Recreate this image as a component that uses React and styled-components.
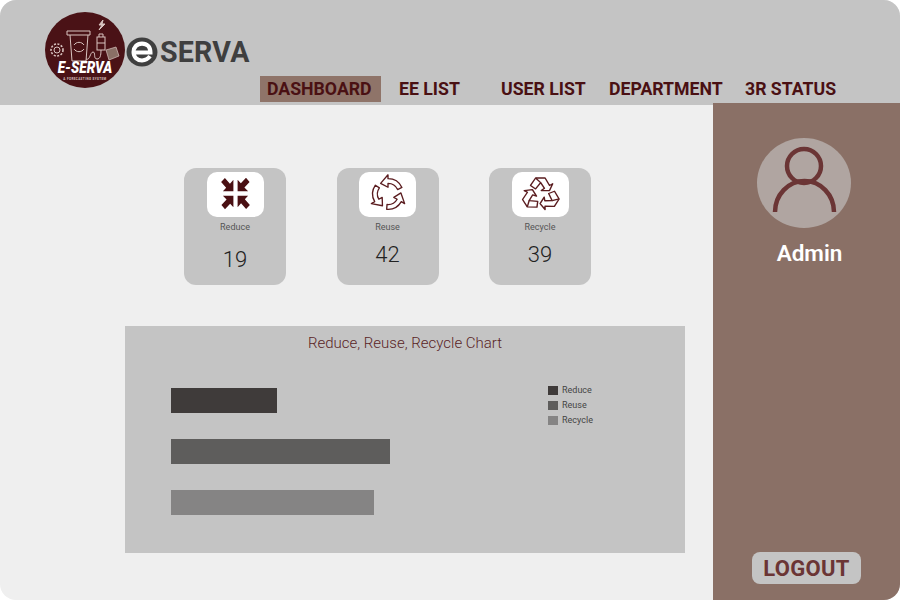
import React from "react";
import styled, { createGlobalStyle } from "styled-components";

const GlobalStyle = createGlobalStyle`
  html, body {
    margin: 0;
    padding: 0;
    background: #fff;
    font-family: "Roboto", "Liberation Sans", sans-serif;
  }
`;

const Page = styled.div`
  width: 900px;
  height: 600px;
  border-radius: 16px;
  overflow: hidden;
  background: #efefef;
  display: flex;
  flex-direction: column;
`;

const Header = styled.header`
  height: 105px;
  flex: none;
  box-sizing: border-box;
  background: #c4c4c4;
  display: flex;
  align-items: flex-end;
  padding: 0 0 3px 45px;
`;

const Brand = styled.div`
  width: 215px;
  height: 76px;
  flex: none;
  align-self: flex-start;
  margin-top: 12px;
  display: flex;
  align-items: center;
`;

const EMarkWrap = styled.span`
  display: flex;
  flex: none;
  margin: 4px 0 0 1px;
`;

const BrandName = styled.span`
  font-size: 28.6px;
  font-weight: 700;
  color: #3f3f3f;
  letter-spacing: 0.2px;
  margin: 4px 0 0 2px;
`;

const Nav = styled.nav`
  display: grid;
  grid-template-columns: 132px 102px 108px 136px auto;
  align-items: center;
`;

const NavItem = styled.a`
  width: ${(p) => (p.$active ? "121px" : "auto")};
  height: 26px;
  box-sizing: border-box;
  padding: 0 7px;
  line-height: 26px;
  font-size: 17.7px;
  font-weight: 700;
  white-space: nowrap;
  color: #4a1013;
  background: ${(p) => (p.$active ? "#8f7469" : "transparent")};
`;

const Body = styled.div`
  flex: 1;
  min-height: 0;
  display: flex;
  margin-top: -2px;
`;

const Content = styled.main`
  flex: 1;
  margin-top: 2px;
`;

const Cards = styled.section`
  display: flex;
  gap: 50.5px;
  padding: 63px 0 0 184px;
`;

const Card = styled.div`
  width: 102px;
  height: 117px;
  box-sizing: border-box;
  padding-top: 4px;
  border-radius: 12px;
  background: #c4c4c4;
  display: flex;
  flex-direction: column;
  align-items: center;
`;

const IconBox = styled.div`
  width: 57px;
  height: 45px;
  border-radius: 10px;
  background: #fff;
  display: flex;
  svg {
    display: block;
  }
`;

const CardLabel = styled.div`
  margin-top: 5px;
  font-size: 9px;
  line-height: 11px;
  color: #555;
`;

const CardValue = styled.div`
  margin-top: ${(p) => p.$offset}px;
  font-size: 22px;
  line-height: 26px;
  font-weight: 300;
  color: #222;
`;

const Chart = styled.section`
  width: 560px;
  height: 227px;
  margin: 41px 0 0 125px;
  background: #c4c4c4;
`;

const ChartTitle = styled.h2`
  margin: 0;
  height: 34px;
  text-align: center;
  font-size: 15px;
  line-height: 34px;
  font-weight: 300;
  color: #5a2426;
`;

const ChartBody = styled.div`
  display: flex;
  padding: 28px 0 0 46px;
`;

const Bars = styled.div`
  width: 377px;
  display: flex;
  flex-direction: column;
  gap: 26px;
`;

const Bar = styled.div`
  height: 25px;
  background: ${(p) => p.$color};
`;

const Legend = styled.ul`
  list-style: none;
  margin: -3px 0 0;
  padding: 0;
  display: flex;
  flex-direction: column;
  gap: 5px;
`;

const LegendItem = styled.li`
  display: flex;
  align-items: center;
  gap: 4px;
  height: 10px;
  font-size: 9px;
  color: #444;
`;

const Swatch = styled.span`
  width: 10px;
  height: 9px;
  background: ${(p) => p.$color};
`;

const Sidebar = styled.aside`
  width: 187px;
  flex: none;
  background: #8a7066;
  display: flex;
  flex-direction: column;
  align-items: center;
  padding: 35px 0 16px;
  box-sizing: border-box;
`;

const Avatar = styled.div`
  width: 94px;
  height: 90px;
  margin-right: 5px;
  border-radius: 50%;
  background: #b0a5a1;
  svg {
    display: block;
  }
`;

const AdminName = styled.div`
  margin: 13px 0 0 6px;
  font-size: 22.5px;
  line-height: 24px;
  font-weight: 600;
  color: #fff;
`;

const Logout = styled.button`
  margin-top: auto;
  width: 109px;
  height: 32px;
  padding: 0;
  border: 0;
  border-radius: 8px;
  background: #c4c4c4;
  color: #6b3535;
  font-family: "Roboto", "Liberation Sans", sans-serif;
  font-size: 22px;
  font-weight: 700;
  letter-spacing: 0.3px;
`;

const ReduceIcon = () => (
  <svg width="57" height="45" viewBox="0 0 57 45" fill="#4a1013">
    <g transform="translate(28.5 21.5) scale(1.05 1.15) translate(-28.5 -22)">
      {[0, 90, 180, 270].map((deg) => (
        <path
          key={deg}
          transform={`rotate(${deg} 28.5 22)`}
          d="M26.5 20 L16.5 20 L19.6 16.9 L14.8 12 L18.4 8.6 L23.2 13.5 L26.5 10 Z"
        />
      ))}
    </g>
  </svg>
);

const ReuseIcon = () => (
  <svg width="57" height="45" viewBox="0 0 57 45" fill="none" stroke="#5a1c1f" strokeWidth="1.4" strokeLinejoin="round">
    {[0, 120, 240].map((deg) => (
      <path
        key={deg}
        transform={`translate(29 22) rotate(${deg}) scale(0.96)`}
        d="M14.5 -6.8 A16 16 0 0 0 0 -16 L0 -20 L-7.7 -11.1 L0 -7 L0 -11 A11 11 0 0 1 10 -4.6 Z"
      />
    ))}
  </svg>
);

const RecycleIcon = () => (
  <svg width="57" height="45" viewBox="6 6 171 135" fill="none" stroke="#5a1c1f" strokeWidth="4.5" strokeLinejoin="round">
    <g transform="translate(92 24) scale(0.95 0.86) translate(-92 -24)">
      {[0, 120, 240].map((deg) => (
        <g key={deg} transform={`rotate(${deg} 92 82)`}>
          <path d="M60 50 L76 24 L106 24 L120 50 L130 44 L120 68 L94 68 L104 60 L92 40 L76 62 Z" />
          <path d="M76 24 L92 40" />
        </g>
      ))}
    </g>
  </svg>
);

const UserIcon = () => (
  <svg width="94" height="90" viewBox="0 0 94 90" fill="none" stroke="#6b3535" strokeWidth="4.5">
    <circle cx="47" cy="28" r="17" />
    <path d="M18 74 A29.5 31 0 0 1 77 74" />
  </svg>
);

const LogoMark = () => (
  <svg width="80" height="76" viewBox="0 0 80 76">
    <ellipse cx="40" cy="38" rx="40" ry="38" fill="#4a1216" />
    <g fill="none" stroke="#d9c4c0" strokeWidth="1">
      <path d="M22 19 H45 V23 H22 Z" />
      <path d="M25 23 L27 49 H41 L43 23" />
      <path d="M29 33 A6 6 0 0 1 39 33 M39 37 A6 6 0 0 1 29 37" />
      <rect x="52" y="25" width="8" height="13" />
      <path d="M54 25 V22 H58 V25 M52 31 H60" />
      <path d="M41 47 C45 49 45 40 48 40 C51 40 48 47 52 47 C55 47 56 44 56 38" />
      <path d="M58 8 L54 13 H57 L54 18 L60 12 H57 Z" fill="#d9c4c0" />
      <circle cx="12" cy="38" r="3" />
      <circle cx="12" cy="38" r="6" strokeDasharray="2 1.5" strokeWidth="1.6" />
    </g>
    <path d="M61 38 L71 35 L74 44 L64 48 Z" fill="#8a7066" stroke="#d9c4c0" strokeWidth="0.7" />
    <text transform="translate(40 61) scale(0.8 1)" textAnchor="middle" fontFamily="Roboto, sans-serif" fontSize="17" fontWeight="900" fontStyle="italic" fill="#fff">E-SERVA</text>
    <text x="40" y="68" textAnchor="middle" letterSpacing="0.4" fontFamily="Roboto, sans-serif" fontSize="3" fontWeight="700" fill="#d9c4c0">A FORECASTING SYSTEM</text>
  </svg>
);

const EMark = () => (
  <svg width="32" height="30" viewBox="0 0 34 32">
    <ellipse cx="17" cy="16" rx="16.5" ry="15.5" fill="#3f3f3f" />
    <path d="M8 16.5 H26 C26 10.5 22.5 7 17 7 C11.5 7 8 11 8 16 C8 21.5 12 25 17 25 C20.5 25 23.5 23.5 25.5 20.5" fill="none" stroke="#fff" strokeWidth="4.4" />
  </svg>
);

const stats = [
  { label: "Reduce", value: 19, offset: 14, Icon: ReduceIcon },
  { label: "Reuse", value: 42, offset: 9, Icon: ReuseIcon },
  { label: "Recycle", value: 39, offset: 9, Icon: RecycleIcon },
];

const bars = [
  { label: "Reduce", width: 106, color: "#3f3b3a" },
  { label: "Reuse", width: 219, color: "#5e5d5c" },
  { label: "Recycle", width: 203, color: "#858484" },
];

const navItems = ["DASHBOARD", "EE LIST", "USER LIST", "DEPARTMENT", "3R STATUS"];

export default function App() {
  return (
    <Page>
      <GlobalStyle />
      <Header>
        <Brand>
          <LogoMark />
          <EMarkWrap>
            <EMark />
          </EMarkWrap>
          <BrandName>SERVA</BrandName>
        </Brand>
        <Nav>
          {navItems.map((item, i) => (
            <NavItem key={item} $active={i === 0}>
              {item}
            </NavItem>
          ))}
        </Nav>
      </Header>
      <Body>
        <Content>
          <Cards>
            {stats.map(({ label, value, offset, Icon }) => (
              <Card key={label}>
                <IconBox>
                  <Icon />
                </IconBox>
                <CardLabel>{label}</CardLabel>
                <CardValue $offset={offset}>{value}</CardValue>
              </Card>
            ))}
          </Cards>
          <Chart>
            <ChartTitle>Reduce, Reuse, Recycle Chart</ChartTitle>
            <ChartBody>
              <Bars>
                {bars.map((bar) => (
                  <Bar key={bar.label} $color={bar.color} style={{ width: bar.width }} />
                ))}
              </Bars>
              <Legend>
                {bars.map((bar) => (
                  <LegendItem key={bar.label}>
                    <Swatch $color={bar.color} />
                    {bar.label}
                  </LegendItem>
                ))}
              </Legend>
            </ChartBody>
          </Chart>
        </Content>
        <Sidebar>
          <Avatar>
            <UserIcon />
          </Avatar>
          <AdminName>Admin</AdminName>
          <Logout>LOGOUT</Logout>
        </Sidebar>
      </Body>
    </Page>
  );
}
